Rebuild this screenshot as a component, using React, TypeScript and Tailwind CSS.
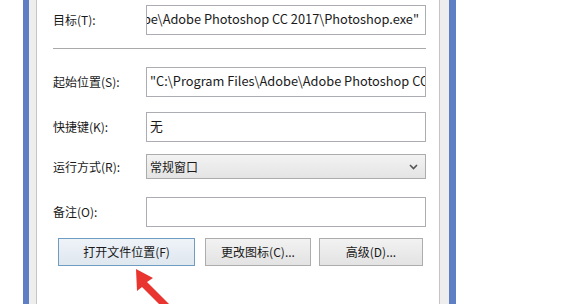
import React from 'react'

const font = { fontFamily: '"Noto Sans CJK SC", "Noto Sans", sans-serif' }

function Label({ children }: { children: React.ReactNode }) {
  return <div className="w-[93px] shrink-0 text-[12px] text-[#1a1a1a] leading-none">{children}</div>
}

function Field({ children, className = '' }: { children?: React.ReactNode; className?: string }) {
  return (
    <div
      className={`w-[280px] h-[30px] border border-[#abadb3] bg-white flex items-center overflow-hidden whitespace-nowrap text-[12.8px] text-[#1a1a1a] pb-[3px] ${className}`}
    >
      {children}
    </div>
  )
}

function Btn({ children, focused = false, className = '' }: { children: React.ReactNode; focused?: boolean; className?: string }) {
  return (
    <div
      className={`h-[28px] flex items-center justify-center text-[12px] text-[#1a1a1a] border ${
        focused ? 'border-[#6f9cc0] bg-gradient-to-b from-[#eef3f8] to-[#dfe7ef]' : 'border-[#adadad] bg-gradient-to-b from-[#f2f2f2] to-[#e3e3e3]'
      } ${className}`}
    >
      {children}
    </div>
  )
}

export default function App() {
  return (
    <div className="w-[580px] h-[304px] bg-white flex overflow-hidden relative" style={font}>
      <div className="w-[23px] shrink-0" />
      <div className="w-[6px] shrink-0 bg-[#5f7fc4]" />
      <div className="w-[7px] shrink-0 bg-[#eeeeee]" />
      <div className="w-px shrink-0 bg-[#c9c4bf]" />

      {/* dialog content */}
      <div className="w-[402px] shrink-0 pl-[16px] pt-[5px] flex flex-col">
        <div className="flex items-center">
          <Label>目标(T):</Label>
          <Field className="justify-end pr-[6px]">obe\Adobe Photoshop CC 2017\Photoshop.exe"</Field>
        </div>

        <div className="mt-[13px] w-[373px] h-px bg-[#a9a9a9]" />

        <div className="flex items-center mt-[18px]">
          <Label>起始位置(S):</Label>
          <Field className="pl-[3px]">"C:\Program Files\Adobe\Adobe Photoshop CC 2017\Photoshop.exe"</Field>
        </div>

        <div className="flex items-center mt-[15px]">
          <Label>快捷键(K):</Label>
          <Field className="pl-[3px]">无</Field>
        </div>

        <div className="flex items-center mt-[12px]">
          <Label>运行方式(R):</Label>
          <div className="w-[280px] h-[25px] border border-[#acacac] bg-gradient-to-b from-[#f3f3f3] to-[#e4e4e4] flex items-center justify-between pl-[3px] pr-[7px] text-[12px] text-[#1a1a1a]">
            <span>常规窗口</span>
            <svg width="9" height="6" viewBox="0 0 9 6">
              <path d="M1 1 L4.5 4.5 L8 1" fill="none" stroke="#555" strokeWidth="1.6" />
            </svg>
          </div>
        </div>

        <div className="flex items-center mt-[18px]">
          <Label>备注(O):</Label>
          <Field />
        </div>

        <div className="flex mt-[11px] pl-[5px] gap-[11px]">
          <Btn focused className="w-[137px]">打开文件位置(F)</Btn>
          <Btn className="w-[106px] -ml-[1px]">更改图标(C)...</Btn>
          <Btn className="w-[104px] -ml-[3px]">高级(D)...</Btn>
        </div>
      </div>

      <div className="w-px shrink-0 bg-[#c9c4bf]" />
      <div className="w-[9px] shrink-0 bg-[#eeeeee]" />
      <div className="w-[7px] shrink-0 bg-[#5f7fc4]" />
      <div className="flex-1" />

      {/* red arrow annotation */}
      <svg className="absolute left-[125px] top-[262px]" width="60" height="42" viewBox="0 0 60 42">
        <polygon points="11,7 28,16 22,20 48,46 42,50 17,25 12,29" fill="#e8352f" />
      </svg>
    </div>
  )
}
